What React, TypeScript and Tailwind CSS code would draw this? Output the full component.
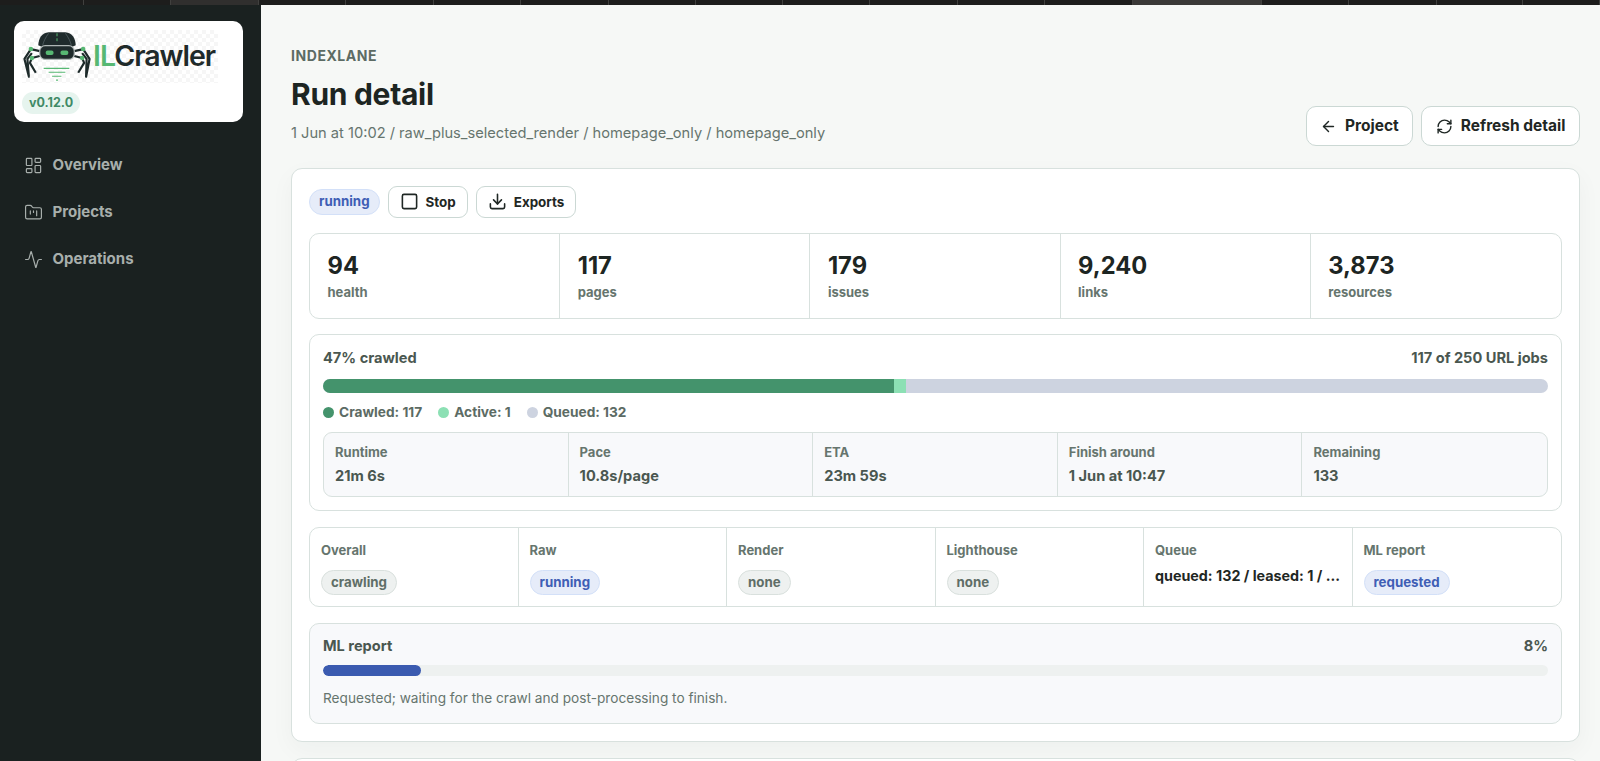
import { Activity, ArrowLeft, Download, FolderKanban, LayoutDashboard, RefreshCw, Square } from "lucide-react";
import type { ReactNode } from "react";

const tabs = [
  "w-[84px] bg-[#1d1d1c]",
  "w-[87px] bg-[#1d1d1c]",
  "w-[88px] bg-[#302f2e]",
  "w-[87px] bg-[#1d1d1c]",
  "w-[88px] bg-[#1d1d1c]",
  "w-[87px] bg-[#1d1d1c]",
  "w-[88px] bg-[#1d1d1c]",
  "w-[87px] bg-[#1d1d1c]",
  "w-[87px] bg-[#1d1d1c]",
  "w-[87px] bg-[#1d1d1c]",
  "w-[88px] bg-[#1d1d1c]",
  "w-[87px] bg-[#1d1d1c]",
  "w-[88px] bg-[#1d1d1c]",
  "w-[129px] bg-[#3a3937]",
  "w-[87px] bg-[#1d1d1c]",
  "w-[88px] bg-[#1d1d1c]",
  "w-[86px] bg-[#1d1d1c]",
  "w-[77px] bg-[#1d1d1c]",
];

function Robot() {
  return (
    <svg viewBox="0 0 72 53" className="h-[53px] w-[71px] shrink-0" fill="none">
      <path d="M18 21 L9 19 L2.5 29 L7 47 L5.5 29 L10 23" stroke="#1d2a2a" strokeWidth="2.2" strokeLinejoin="round" />
      <path d="M53 21 L62 19 L68.5 29 L65 47 L65.5 29 L61 23" stroke="#1d2a2a" strokeWidth="2.2" strokeLinejoin="round" />
      <path d="M18 26 L10 28 L8 33 L14 43" stroke="#1d2a2a" strokeWidth="2.2" strokeLinejoin="round" />
      <path d="M53 26 L61 28 L63 33 L57 43" stroke="#1d2a2a" strokeWidth="2.2" strokeLinejoin="round" />
      <circle cx="9" cy="19" r="2.3" fill="#57b873" />
      <circle cx="10" cy="28" r="2.3" fill="#57b873" />
      <circle cx="62" cy="19" r="2.3" fill="#57b873" />
      <circle cx="61" cy="28" r="2.3" fill="#57b873" />
      <path d="M16.5 15 C17 8 20 2.5 27 2 L44 2 C51 2.5 54 8 54.5 15 L50 17 L21 17 Z" fill="#1f2b2c" />
      <path d="M35.5 3 V13" stroke="#57b873" strokeWidth="1" strokeDasharray="3 2" />
      <path d="M27 3 C24 7 22 11 21 15 M44 3 C47 7 49 11 50 15" stroke="#59666a" strokeWidth="0.7" />
      <rect x="18" y="15.5" width="35" height="14" rx="5.5" fill="#1f2b2c" stroke="#aeb6b5" strokeWidth="1.2" />
      <rect x="24" y="20.5" width="8" height="4.5" rx="2" fill="#57b873" />
      <rect x="39" y="20.5" width="8" height="4.5" rx="2" fill="#57b873" />
      <path d="M22 38.5 H48 M27 42.5 H44 M30.5 46.5 H40 M34.5 50.5 H36.5" stroke="#57b873" strokeWidth="1.2" />
    </svg>
  );
}

function Btn({ icon, label, big }: { icon: ReactNode; label: string; big?: boolean }) {
  return (
    <button
      className={
        big
          ? "flex h-[40px] items-center gap-[8px] rounded-[10px] border border-[#cbd8d4] bg-white px-[13.5px] text-[15.5px] font-bold text-[#1f2724]"
          : "flex h-[31.5px] items-center gap-[7px] rounded-[9px] border border-[#cbd8d4] bg-white px-[11px] text-[13.4px] font-bold text-[#1f2724]"
      }
    >
      {icon}
      {label}
    </button>
  );
}

function Badge({ label, tone }: { label: string; tone: "blue" | "gray" }) {
  return (
    <span
      className={
        tone === "blue"
          ? "inline-flex h-[25.5px] items-center rounded-full border border-[#d3e0f8] bg-[#e6ecf9] px-[9px] text-[13.3px] font-bold text-[#3f5eb5]"
          : "inline-flex h-[25.5px] items-center rounded-full border border-[#d9e0dd] bg-[#eef1f0] px-[9px] text-[13.3px] font-bold text-[#5f6e67]"
      }
    >
      {label}
    </span>
  );
}

function Stat({ value, label, last }: { value: string; label: string; last?: boolean }) {
  return (
    <div className={last ? "pt-[17px] pr-[17px] pl-[17.5px]" : "border-r border-[#d8e1de] pt-[17px] pr-[17px] pl-[17.5px]"}>
      <div className="text-[23.7px] leading-[30px] font-bold text-[#1d2522]">{value}</div>
      <div className="mt-[2px] text-[13px] leading-[18px] font-bold text-[#66756e]">{label}</div>
    </div>
  );
}

function Metric({ label, value, last }: { label: string; value: string; last?: boolean }) {
  return (
    <div className={last ? "px-[11px] pt-[10px]" : "border-r border-[#d8e1de] px-[11px] pt-[10px]"}>
      <div className="text-[13px] leading-[18px] font-bold text-[#66756e]">{label}</div>
      <div className="mt-[6px] text-[14.6px] leading-[18px] font-bold text-[#4a5750]">{value}</div>
    </div>
  );
}

function Status({ label, children, last }: { label: string; children: ReactNode; last?: boolean }) {
  return (
    <div className={last ? "min-w-0 px-[11px] pt-[13px]" : "min-w-0 border-r border-[#d8e1de] px-[11px] pt-[13px]"}>
      <div className="text-[13px] leading-[18px] font-bold text-[#66756e]">{label}</div>
      <div className="mt-[10px]">{children}</div>
    </div>
  );
}

function Legend({ dot, label }: { dot: string; label: string }) {
  return (
    <div className="flex items-center gap-[5px] text-[13.7px] font-bold text-[#5c6b64]">
      <span className={`h-[11px] w-[11px] rounded-full ${dot}`} />
      {label}
    </div>
  );
}

export default function App() {
  return (
    <div className="flex h-[761px] flex-col overflow-hidden bg-[#f6f8f6] [font-family:Inter,sans-serif]">
      <div className="flex h-[5px] shrink-0 overflow-hidden">
        {tabs.map((t, i) => (
          <div key={i} className={`${t} shrink-0 border-r border-[#40403e]`} />
        ))}
      </div>
      <div className="flex min-h-0 flex-1">
        <aside className="w-[261px] shrink-0 bg-[#1a2120] pt-[16px] pr-[18px] pl-[14px]">
          <div className="h-[101px] rounded-[10px] bg-white px-[8px] pt-[9px]">
            <div className="flex h-[53px] w-[196px] items-center bg-[repeating-conic-gradient(#f6f6f6_0_25%,#ffffff_0_50%)] bg-[length:8px_8px]">
              <Robot />
              <div className="text-[28.5px] leading-none font-semibold tracking-[-0.035em] text-[#1f2a2a]">
                <span className="text-[#57b873]">IL</span>Crawler
              </div>
            </div>
            <span className="mt-[9px] inline-flex h-[22px] items-center rounded-full bg-[#e6f4ee] px-[7px] text-[12.5px] font-bold text-[#3f8a66]">
              v0.12.0
            </span>
          </div>
          <nav className="mt-[31px] flex flex-col gap-[23px] text-[15px] font-bold text-[#a8afac]">
            <div className="flex h-[24px] items-center gap-[10px] pl-[9.5px]">
              <LayoutDashboard size={19} strokeWidth={1.5} />
              Overview
            </div>
            <div className="flex h-[24px] items-center gap-[10px] pl-[9.5px]">
              <FolderKanban size={19} strokeWidth={1.5} />
              Projects
            </div>
            <div className="flex h-[24px] items-center gap-[10px] pl-[9.5px]">
              <Activity size={19} strokeWidth={1.5} />
              Operations
            </div>
          </nav>
        </aside>
        <main className="min-w-0 flex-1 pt-[42px] pr-[20px] pl-[30px]">
          <div className="flex items-end justify-between">
            <div>
              <div className="text-[14px] leading-[18px] font-bold tracking-[0.04em] text-[#5c6b64]">INDEXLANE</div>
              <h1 className="mt-[10px] text-[30px] leading-[38px] font-bold tracking-[-0.01em] text-[#1d2522]">Run detail</h1>
              <div className="mt-[10px] text-[14.65px] leading-[20px] text-[#66756e]">
                1 Jun at 10:02 / raw_plus_selected_render / homepage_only / homepage_only
              </div>
            </div>
            <div className="-mb-[3px] flex gap-[8px]">
              <Btn big icon={<ArrowLeft size={17} strokeWidth={2} />} label="Project" />
              <Btn big icon={<RefreshCw size={17} strokeWidth={2} />} label="Refresh detail" />
            </div>
          </div>
          <section className="mt-[25px] flex flex-col rounded-[11px] border border-[#d8e1de] bg-white p-[17px] shadow-[0_8px_24px_rgba(30,50,40,0.04)]">
            <div className="mb-[15px] flex items-center gap-[8px]">
              <Badge tone="blue" label="running" />
              <Btn icon={<Square size={19} strokeWidth={2} />} label="Stop" />
              <Btn icon={<Download size={19} strokeWidth={2} />} label="Exports" />
            </div>
            <div className="mb-[15px] grid h-[86px] grid-cols-5 rounded-[10px] border border-[#d8e1de]">
              <Stat value="94" label="health" />
              <Stat value="117" label="pages" />
              <Stat value="179" label="issues" />
              <Stat value="9,240" label="links" />
              <Stat value="3,873" label="resources" last />
            </div>
            <div className="mb-[16px] h-[177px] rounded-[10px] border border-[#d8e1de] px-[13px] pt-[14px]">
              <div className="flex justify-between text-[14.6px] leading-[18px] font-bold text-[#4a5750]">
                <span>47% crawled</span>
                <span>117 of 250 URL jobs</span>
              </div>
              <div className="mt-[12px] flex h-[14px] overflow-hidden rounded-full bg-[#cdd3e0]">
                <div className="w-[46.6%] bg-[#44936c]" />
                <div className="w-[1%] bg-[#8ce0b4]" />
              </div>
              <div className="mt-[11px] flex h-[18px] gap-[16px]">
                <Legend dot="bg-[#44936c]" label="Crawled: 117" />
                <Legend dot="bg-[#8ce0b4]" label="Active: 1" />
                <Legend dot="bg-[#cdd3e0]" label="Queued: 132" />
              </div>
              <div className="mt-[10px] grid h-[65px] grid-cols-5 rounded-[9px] border border-[#d8e1de] bg-[#f8f9fb]">
                <Metric label="Runtime" value="21m 6s" />
                <Metric label="Pace" value="10.8s/page" />
                <Metric label="ETA" value="23m 59s" />
                <Metric label="Finish around" value="1 Jun at 10:47" />
                <Metric label="Remaining" value="133" last />
              </div>
            </div>
            <div className="mb-[16px] grid h-[80px] grid-cols-6 rounded-[10px] border border-[#d8e1de]">
              <Status label="Overall">
                <Badge tone="gray" label="crawling" />
              </Status>
              <Status label="Raw">
                <Badge tone="blue" label="running" />
              </Status>
              <Status label="Render">
                <Badge tone="gray" label="none" />
              </Status>
              <Status label="Lighthouse">
                <Badge tone="gray" label="none" />
              </Status>
              <Status label="Queue">
                <div className="-mt-[2px] text-[14.3px] leading-[18px] font-bold whitespace-nowrap text-[#1f2724]">queued: 132 / leased: 1 / ...</div>
              </Status>
              <Status label="ML report" last>
                <Badge tone="blue" label="requested" />
              </Status>
            </div>
            <div className="h-[101px] rounded-[10px] border border-[#d8e1de] bg-[#f8f9fb] px-[13px] pt-[13px]">
              <div className="flex justify-between text-[14.6px] leading-[18px] font-bold text-[#4a5750]">
                <span>ML report</span>
                <span>8%</span>
              </div>
              <div className="mt-[10px] h-[11px] overflow-hidden rounded-full bg-[#eef1f0]">
                <div className="h-full w-[8%] rounded-full bg-[#3b5bb0]" />
              </div>
              <div className="mt-[12px] text-[13.65px] leading-[20px] text-[#66756e]">
                Requested; waiting for the crawl and post-processing to finish.
              </div>
            </div>
          </section>
          <div className="mt-[16px] h-[40px] rounded-[11px] border border-[#d8e1de] bg-white" />
        </main>
      </div>
    </div>
  );
}
